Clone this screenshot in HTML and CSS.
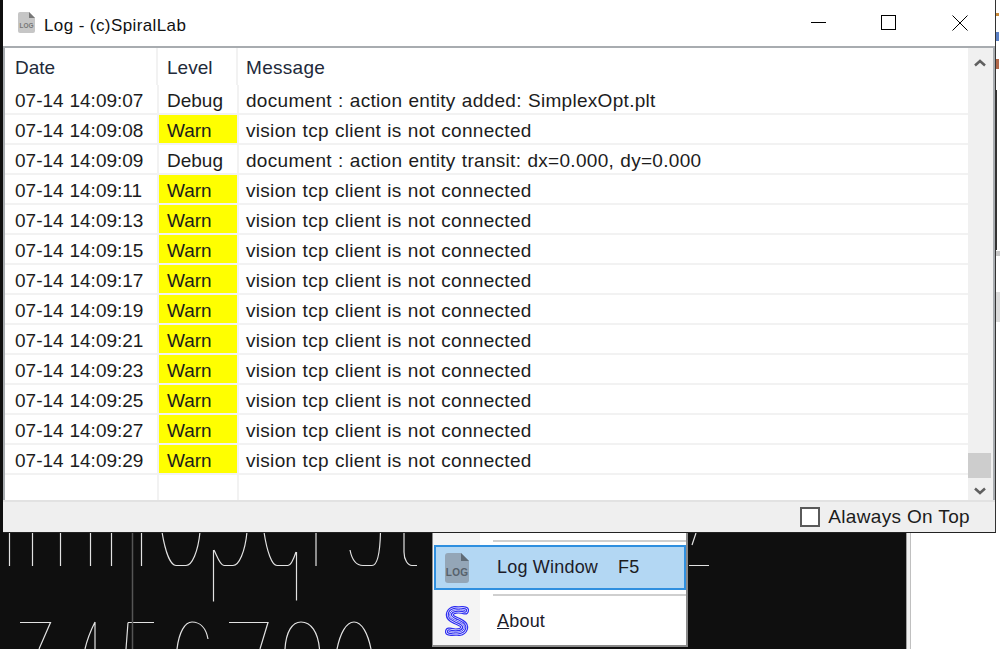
FILE: index.html
```html
<!DOCTYPE html>
<html>
<head>
<meta charset="utf-8">
<title>Log</title>
<link rel="stylesheet" href="styles.css">
</head>
<body>
<div class="desktop">
  <div class="cad">
    <svg class="cad-art" width="906" height="649" viewBox="0 0 906 649">
      <g fill="none" stroke="#e2e2e2" stroke-width="1.200">
        <path d="M9.500 530V566M32.500 530V566M60.500 530V566M90.500 530V566M111.500 530V566M141.500 530V566"/>
        <path d="M162 532C165 550 170 565.500 176 565.500H186C192 565.500 198 552 200 532"/>
        <path d="M213.500 550V601.500M214 550C217 556 220 565.500 224 565.500H233C239 565.500 245 552 247 532"/>
        <path d="M264 532C267 552 272 565.500 277 565.500H288C291 565.500 294 558 296 552M296.500 552V600.500"/>
        <path d="M316 532V566"/>
        <path d="M350 550C352 560 357 565.500 363 565.500H372C378 565.500 380 552 380.500 532"/>
        <path d="M404 532V552C404 560 408 565.500 412 565.500H417"/>
        <path d="M20 622.500H50.500L39 649M95 622C91 630 87 640 85 649M95 622V649M128 622.500H154M128 622.500L126 649"/>
        <path d="M208 639C206 628 200 622 192 622C185 622 179 632 177 649M229 622.500H268L260 649"/>
        <path d="M285 649C286 632 292 622 301 622C311 622 318 632 319.500 649M337 649C340 634 346 622 354 622C362 622 368 634 371 649"/>
      </g>
      <path class="cad-axis" d="M132.500 532V649"/>
      <path d="M689 565.500H709M696 533L692 545" fill="none" stroke="#e2e2e2" stroke-width="1.200"/>
    </svg>
  </div>
  <div class="side-rule"></div>

  <div class="behind">
    <i class="chip chip-a"></i>
    <i class="chip chip-b"></i>
    <i class="chip chip-c"></i>
    <i class="chip chip-d"></i>
    <i class="chip chip-e"></i>
    <i class="chip chip-f"></i>
  </div>

  <div class="menu">
    <div class="menu-rail"></div>
    <div class="menu-body">
      <div class="menu-sep"></div>
      <div class="menu-item menu-item-active">
        <svg class="menu-icon" width="24" height="30" viewBox="0 0 24 30">
          <path d="M3 0H16L24 8V27a3 3 0 0 1-3 3H3a3 3 0 0 1-3-3V3a3 3 0 0 1 3-3Z" fill="#94a6b7"/>
          <path d="M16 0L24 8H16Z" fill="#5f6b76"/>
          <text x="12" y="23" class="icon-text">LOG</text>
        </svg>
        <span class="menu-label">Log Window</span>
        <span class="menu-key">F5</span>
      </div>
      <div class="menu-sep menu-sep-low"></div>
      <div class="menu-item">
        <svg class="menu-icon" width="24" height="30" viewBox="0 0 24 30">
          <defs>
            <path id="s-curve" d="M20 4.500C14 3 6.500 3 5 7.500C3.500 12 9 13.500 12 15C15 16.500 20.500 18 19 22.500C17.500 27 10 27 4 25.500" fill="none" stroke-linecap="round"/>
          </defs>
          <use href="#s-curve" stroke="#2f2ff0" stroke-width="8"/>
          <use href="#s-curve" stroke="#fff" stroke-width="5.600"/>
          <use href="#s-curve" stroke="#2f2ff0" stroke-width="4.400"/>
          <use href="#s-curve" stroke="#fff" stroke-width="2"/>
          <use href="#s-curve" stroke="#2f2ff0" stroke-width="0.900"/>
        </svg>
        <span class="menu-label"><u>A</u>bout</span>
      </div>
    </div>
  </div>

  <div class="window">
    <div class="titlebar">
      <svg class="title-icon" width="17" height="21" viewBox="0 0 17 21">
        <path d="M2 0H11L17 6V19a2 2 0 0 1-2 2H2a2 2 0 0 1-2-2V2a2 2 0 0 1 2-2Z" fill="#c6c6c6"/>
        <path d="M11 0L17 6H11Z" fill="#777"/>
        <text x="8.500" y="16" class="title-icon-text">LOG</text>
      </svg>
      <span class="title-text">Log - (c)SpiralLab</span>
      <div class="win-buttons">
        <svg class="win-btn" width="16" height="16" viewBox="0 0 16 16"><path d="M0 7.500H15" stroke="#000" fill="none"/></svg>
        <svg class="win-btn" width="16" height="16" viewBox="0 0 16 16"><rect x="0.500" y="0.500" width="14" height="14" stroke="#000" fill="none"/></svg>
        <svg class="win-btn win-btn-close" width="16" height="16" viewBox="0 0 16 16"><path d="M0.500 0.500L15.500 15.500M15.500 0.500L0.500 15.500" stroke="#000" fill="none"/></svg>
      </div>
    </div>
    <div class="list-frame">
      <div class="list">
        <div class="row head">
          <div class="c-date">Date</div><div class="c-level">Level</div><div class="c-msg">Message</div>
        </div>
        <div class="row"><div class="c-date">07-14 14:09:07</div><div class="c-level">Debug</div><div class="c-msg">document : action entity added: SimplexOpt.plt</div></div>
        <div class="row"><div class="c-date">07-14 14:09:08</div><div class="c-level warn">Warn</div><div class="c-msg">vision tcp client is not connected</div></div>
        <div class="row"><div class="c-date">07-14 14:09:09</div><div class="c-level">Debug</div><div class="c-msg">document : action entity transit: dx=0.000, dy=0.000</div></div>
        <div class="row"><div class="c-date">07-14 14:09:11</div><div class="c-level warn">Warn</div><div class="c-msg">vision tcp client is not connected</div></div>
        <div class="row"><div class="c-date">07-14 14:09:13</div><div class="c-level warn">Warn</div><div class="c-msg">vision tcp client is not connected</div></div>
        <div class="row"><div class="c-date">07-14 14:09:15</div><div class="c-level warn">Warn</div><div class="c-msg">vision tcp client is not connected</div></div>
        <div class="row"><div class="c-date">07-14 14:09:17</div><div class="c-level warn">Warn</div><div class="c-msg">vision tcp client is not connected</div></div>
        <div class="row"><div class="c-date">07-14 14:09:19</div><div class="c-level warn">Warn</div><div class="c-msg">vision tcp client is not connected</div></div>
        <div class="row"><div class="c-date">07-14 14:09:21</div><div class="c-level warn">Warn</div><div class="c-msg">vision tcp client is not connected</div></div>
        <div class="row"><div class="c-date">07-14 14:09:23</div><div class="c-level warn">Warn</div><div class="c-msg">vision tcp client is not connected</div></div>
        <div class="row"><div class="c-date">07-14 14:09:25</div><div class="c-level warn">Warn</div><div class="c-msg">vision tcp client is not connected</div></div>
        <div class="row"><div class="c-date">07-14 14:09:27</div><div class="c-level warn">Warn</div><div class="c-msg">vision tcp client is not connected</div></div>
        <div class="row"><div class="c-date">07-14 14:09:29</div><div class="c-level warn">Warn</div><div class="c-msg">vision tcp client is not connected</div></div>
        <div class="row row-empty"><div class="c-date"></div><div class="c-level"></div><div class="c-msg"></div></div>
      </div>
      <div class="scrollbar">
        <svg class="arrow" width="12" height="8" viewBox="0 0 12 8"><path d="M1 6.500L6 2L11 6.500" fill="none" stroke="#606060" stroke-width="2.500"/></svg>
        <div class="track"><div class="thumb"></div></div>
        <svg class="arrow" width="12" height="8" viewBox="0 0 12 8"><path d="M1 1.500L6 6L11 1.500" fill="none" stroke="#606060" stroke-width="2.500"/></svg>
      </div>
    </div>
    <div class="statusbar">
      <label class="check"><span class="checkbox"></span><span class="check-text">Alaways On Top</span></label>
    </div>
  </div>
</div>
</body>
</html>
```
FILE: styles.css
```css
html, body {
  margin: 0;
  padding: 0;
  background: #fff;
}
.desktop {
  position: relative;
  width: 1000px;
  height: 649px;
  overflow: hidden;
  font-family: "Liberation Sans", Arial, sans-serif;
  color: #1c1c1c;
  background: #fff;
}
.cad {
  position: absolute;
  left: 0;
  top: 0;
  width: 906px;
  height: 649px;
  background: #0f0f0f;
}
.cad-art {
  display: block;
}
.cad-axis {
  stroke: #555;
  stroke-width: 1.500;
  fill: none;
}
.side-rule {
  position: absolute;
  left: 906px;
  top: 0;
  width: 5px;
  height: 649px;
  background: #f0f0f0;
  border-left: 1px solid #a0a0a0;
  border-right: 1px solid #c0c0c0;
  box-sizing: border-box;
}
.behind {
  position: absolute;
  left: 996px;
  top: 0;
  width: 4px;
  height: 340px;
}
.chip {
  position: absolute;
  left: 0;
  display: block;
}
.chip-a {
  top: 13px;
  width: 3px;
  height: 3px;
  background: #c98a3a;
}
.chip-b {
  top: 32px;
  width: 3px;
  height: 9px;
  background: #5a7fc4;
}
.chip-c {
  top: 59px;
  width: 3px;
  height: 10px;
  background: #b0684a;
}
.chip-d {
  top: 90px;
  width: 1px;
  height: 160px;
  background: #333;
}
.chip-e {
  top: 251px;
  width: 4px;
  height: 5px;
  background: #c8c8c8;
}
.chip-f {
  top: 292px;
  width: 4px;
  height: 30px;
  background: #dcdcdc;
}
.window {
  position: absolute;
  left: 3px;
  top: 0;
  width: 993px;
  height: 533px;
  background: #fff;
  border-right: 1px solid #333;
  border-bottom: 1px solid #222;
  box-sizing: border-box;
  display: flex;
  flex-direction: column;
}
.titlebar {
  height: 48px;
  display: flex;
  align-items: center;
  padding-left: 15px;
  flex: none;
  box-sizing: border-box;
  background: #fff;
  border-bottom: 2px solid #a8acb0;
}
.title-icon {
  margin-right: 9px;
  margin-top: -1px;
}
.title-icon-text {
  font-size: 6.500px;
  font-weight: bold;
  fill: #777;
  text-anchor: middle;
}
.title-text {
  font-size: 17px;
  color: #111;
  letter-spacing: 0.400px;
  margin-top: 5px;
}
.win-buttons {
  margin-left: auto;
  display: flex;
  gap: 54px;
  padding-right: 27px;
}
.win-btn {
  display: block;
}
.win-btn-close {
  margin-left: 1px;
}
.list-frame {
  flex: 1;
  display: flex;
  min-height: 0;
  background: #fff;
  border-left: 2px solid #a8acb0;
  border-right: 2px solid #a8acb0;
}
.list {
  flex: 1;
  min-width: 0;
  font-size: 19px;
  letter-spacing: 0.250px;
  word-spacing: 0.600px;
  line-height: 32px;
}
.row {
  display: flex;
  height: 30px;
  box-sizing: border-box;
  border-bottom: 2px solid #f2f2f2;
}
.head {
  height: 37px;
  border-bottom: none;
  line-height: 39px;
  color: #222a3a;
}
.row-empty {
  height: 25px;
  border-bottom: none;
}
.c-date {
  width: 152px;
  padding-left: 10px;
  box-sizing: border-box;
  flex: none;
  white-space: nowrap;
  letter-spacing: 0;
}
.c-level {
  width: 80px;
  padding-left: 8px;
  box-sizing: border-box;
  flex: none;
  border-left: 2px solid #f2f2f2;
  letter-spacing: 0;
}
.c-msg {
  flex: 1;
  padding-left: 7px;
  white-space: nowrap;
  box-sizing: border-box;
  border-left: 2px solid #f2f2f2;
  margin-right: 2px;
  letter-spacing: 0.300px;
}
.head .c-date {
  width: 151px;
}
.head .c-level {
  width: 80px;
  padding-left: 9px;
}
.head .c-msg {
  padding-left: 8px;
}
.warn {
  background: #ffff00;
  height: 28px;
  border-left-color: #f2f2f2;
  background-clip: padding-box;
}
.scrollbar {
  width: 25px;
  flex: none;
  background: #f0f0f0;
  display: flex;
  flex-direction: column;
  align-items: center;
  padding: 11px 2px 5px 0;
  box-sizing: border-box;
}
.arrow {
  flex: none;
  display: block;
}
.track {
  flex: 1;
  width: 100%;
  display: flex;
  align-items: flex-end;
  padding-bottom: 9px;
  box-sizing: border-box;
}
.thumb {
  width: 100%;
  height: 25px;
  background: #cdcdcd;
}
.statusbar {
  height: 32px;
  flex: none;
  background: #efefef;
  border-top: 2px solid #e2e2e2;
  box-sizing: border-box;
  display: flex;
  justify-content: flex-end;
  align-items: center;
  padding-right: 25px;
  font-size: 19px;
}
.check {
  display: flex;
  align-items: center;
  gap: 8px;
}
.check-text {
  letter-spacing: 0.350px;
}
.checkbox {
  display: block;
  width: 20px;
  height: 20px;
  box-sizing: border-box;
  background: #fff;
  border: 2px solid #5a5a5a;
}
.menu {
  position: absolute;
  left: 432px;
  top: 525px;
  width: 256px;
  height: 122px;
  background: #fff;
  border-style: solid;
  border-color: #8a8a8a;
  border-width: 1px 2px 2px 1px;
  box-sizing: border-box;
}
.menu-rail {
  position: absolute;
  left: 0;
  top: 0;
  width: 47px;
  height: 100%;
  background: #f4f4f4;
}
.menu-body {
  position: relative;
  padding: 14px 0 0 1px;
}
.menu-sep {
  height: 2px;
  margin-left: 59px;
  margin-bottom: 3px;
  background: #cfcfcf;
}
.menu-sep-low {
  margin-top: 4px;
  margin-bottom: 0;
}
.menu-item {
  display: flex;
  align-items: center;
  height: 50px;
  box-sizing: border-box;
  font-size: 18px;
  letter-spacing: 0.200px;
  padding-left: 9px;
  border: 2px solid transparent;
}
.menu-item-active {
  height: 45px;
  background: #b3d7f3;
  border-color: #2f8fdf;
}
.menu-icon {
  flex: none;
  margin-right: 28px;
}
.icon-text {
  font-size: 10px;
  font-weight: bold;
  fill: #56616b;
  text-anchor: middle;
}
.menu-label {
  color: #1c1c2a;
}
.menu-key {
  margin-left: 20px;
}
```
